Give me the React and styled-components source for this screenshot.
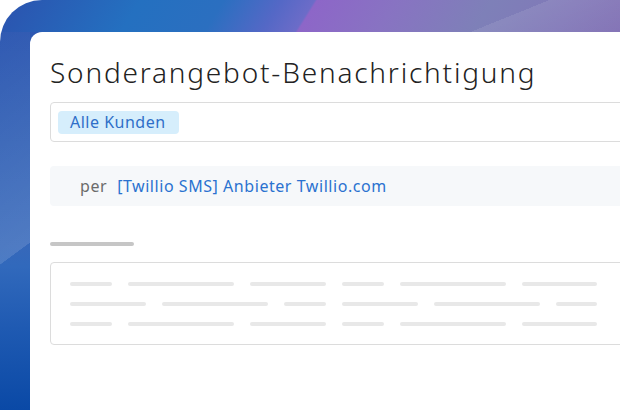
import React from "react";
import styled, { createGlobalStyle } from "styled-components";

const GlobalStyle = createGlobalStyle`
   html, body {
      margin: 0;
      padding: 0;
      background: #fff;
   }
   body {
      font-family: "Noto Sans", "Open Sans", sans-serif;
   }
`;

// top band + left strip of the backdrop, each with its own gradient and sheen
const Frame = styled.div`
   width: 620px;
   height: 410px;
   overflow: hidden;
   border-top-left-radius: 42px;
   padding: 32px 0 0 30px;
   box-sizing: border-box;
   background:
      linear-gradient(158deg, transparent 78.6%, rgba(255, 255, 255, 0.09) 78.6%, rgba(255, 255, 255, 0.02) 100%) top left / 100% 32px no-repeat,
      linear-gradient(122deg, #2b55b0 2%, #2470c0 22%, #2b6fc0 35%, #5468c6 44%, #6c6cc8 49.2%, #8d66c8 49.6%, #8873c2 62%, #7e80b8 77%, #8178b8 90%, #8272b5 100%) top left / 100% 32px no-repeat,
      linear-gradient(143.6deg, transparent 0%, rgba(255, 255, 255, 0.13) 61.2%, transparent 61.3%) top left / 30px 100% no-repeat,
      linear-gradient(180deg, #2c55b0 0%, #3160b5 35%, #3668ba 60%, #3169bc 65%, #1f5ab2 80%, #0a49a6 100%);
`;

const Card = styled.div`
   width: 720px;
   height: 420px;
   background: #fff;
   border-top-left-radius: 12px;
   padding: 22px 0 0 20px;
   box-sizing: border-box;
   display: flex;
   flex-direction: column;
`;

const Title = styled.h1`
   margin: 0;
   font-weight: 300;
   font-size: 28px;
   line-height: 36px;
   color: #222;
   letter-spacing: 1.8px;
`;

const Field = styled.div`
   margin-top: 12px;
   height: 40px;
   box-sizing: border-box;
   border: 1px solid #dcdcdc;
   border-radius: 4px;
   display: flex;
   align-items: center;
   padding-left: 7px;
`;

const Tag = styled.span`
   background: #d6eefc;
   color: #2f6fc8;
   font-size: 16px;
   letter-spacing: 0.5px;
   height: 23px;
   line-height: 23px;
   padding: 0 13px 0 12px;
   border-radius: 4px;
`;

const Channel = styled.div`
   margin-top: 24px;
   height: 40px;
   background: #f6f8fa;
   border-radius: 4px;
   display: flex;
   align-items: center;
   padding-left: 30px;
   gap: 10px;
   font-size: 16px;
   letter-spacing: 0.55px;
`;

const Muted = styled.span`
   color: #6b6b6b;
`;

const Link = styled.span`
   color: #2a72d0;
`;

const Divider = styled.div`
   margin-top: 36px;
   width: 84px;
   height: 4px;
   border-radius: 2px;
   background: #c6c6c6;
`;

const Box = styled.div`
   margin-top: 16px;
   border: 1px solid #dcdcdc;
   border-radius: 4px;
   padding: 19px 0 18px 19px;
   display: flex;
   flex-direction: column;
   gap: 16px;
`;

const LineRow = styled.div`
   display: flex;
   gap: 16px;
`;

const Line = styled.div`
   width: ${(p) => p.$w}px;
   height: 4px;
   border-radius: 2px;
   background: #e8e8e8;
`;

const rows = [
   [42, 106, 76, 42, 106, 75],
   [76, 106, 42, 76, 106, 41],
   [42, 106, 76, 42, 106, 75],
];

const App = () => {
   return (
      <>
         <GlobalStyle />
         <Frame>
            <Card>
               <Title>Sonderangebot-Benachrichtigung</Title>
               <Field>
                  <Tag>Alle Kunden</Tag>
               </Field>
               <Channel>
                  <Muted>per</Muted>
                  <Link>[Twillio SMS] Anbieter Twillio.com</Link>
               </Channel>
               <Divider />
               <Box>
                  {rows.map((row, i) => (
                     <LineRow key={i}>
                        {row.map((w, j) => (
                           <Line key={j} $w={w} />
                        ))}
                     </LineRow>
                  ))}
               </Box>
            </Card>
         </Frame>
      </>
   );
};

export default App;
